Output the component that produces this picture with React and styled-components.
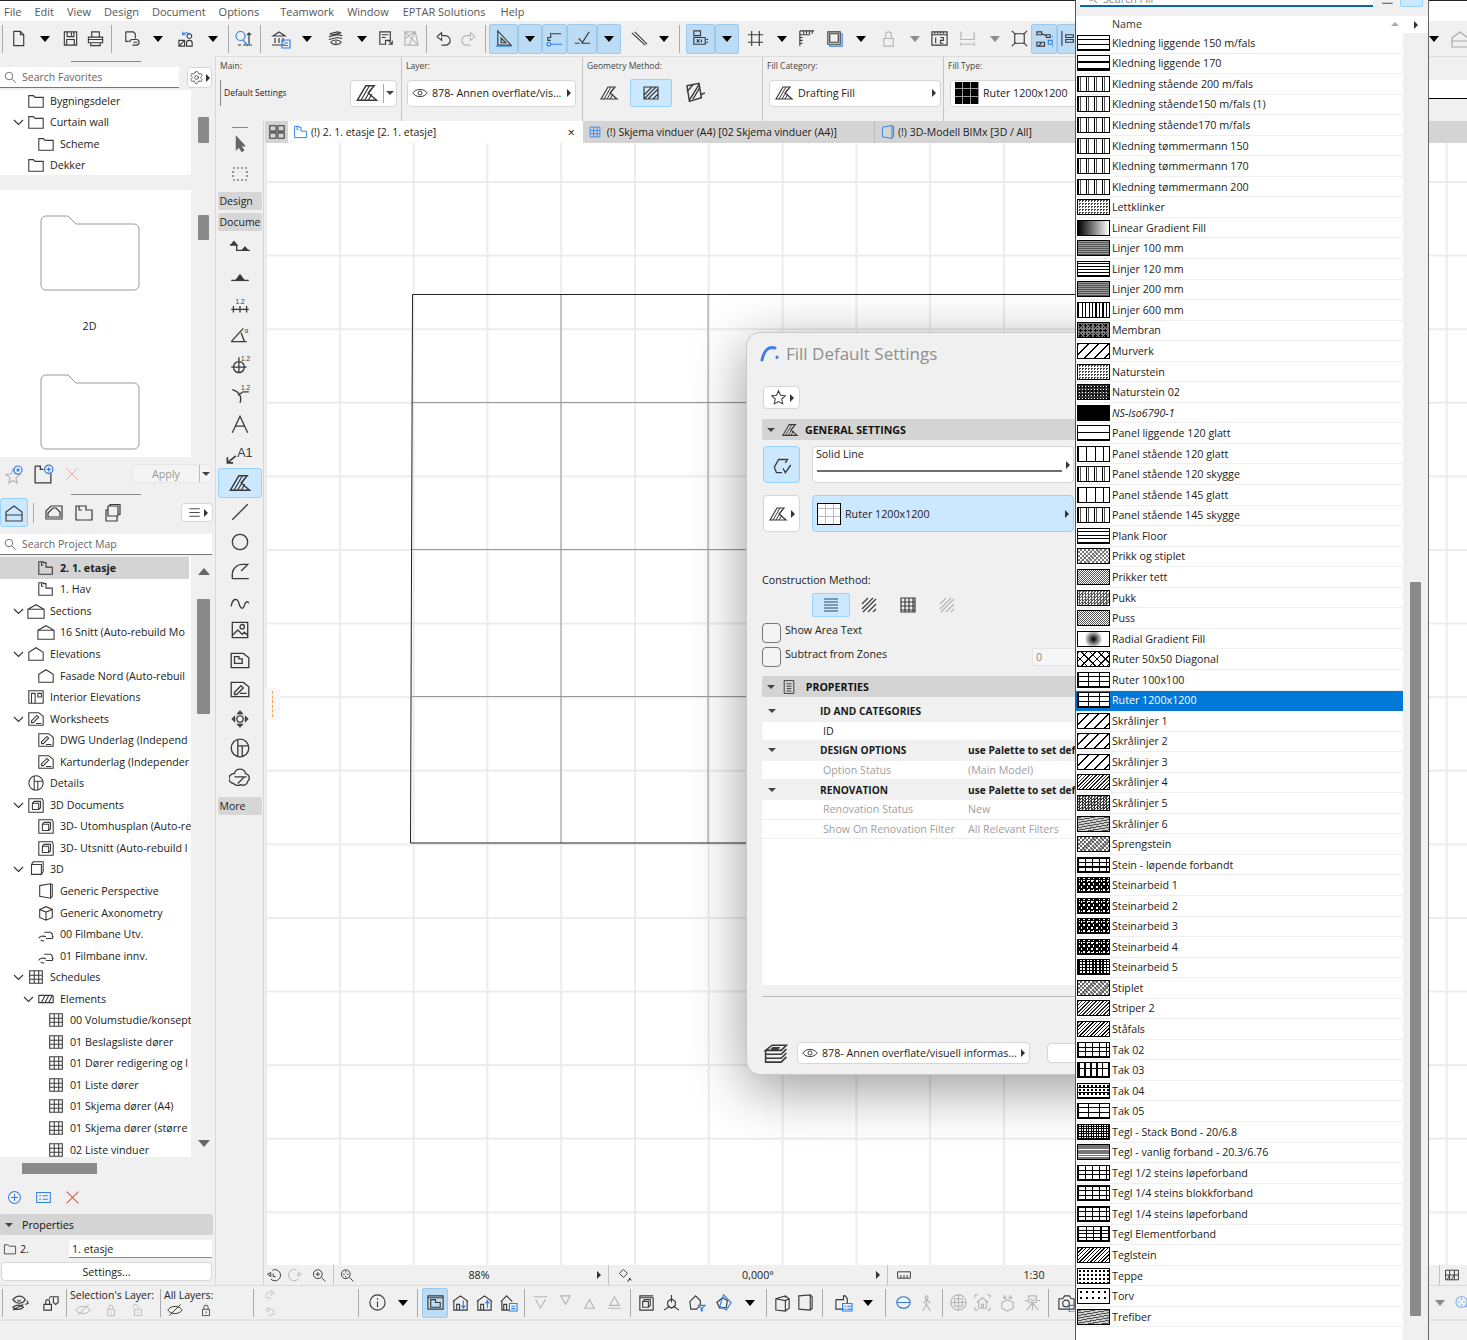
import React from 'react';
import styled, { createGlobalStyle } from 'styled-components';
import { Settings } from 'lucide-react';

const GlobalStyle = createGlobalStyle`
  html, body {
    margin: 0;
    padding: 0;
    background: #f0f0f0;
  }
  body {
    font-family: "Open Sans", "Noto Sans", "Liberation Sans", sans-serif;
    font-size: 10.7px;
    color: #222;
  }
  * {
    box-sizing: border-box;
  }
`;

const icons = {
  new: 'M5 2.5h7l3.5 3.5v11.5H5zM12 2.5V6h3.5',
  save: 'M3.5 3h13v14h-13zM6.5 3v5h7V3M6 17v-6h8v6M11 4v3',
  print: 'M6 8V3h8v5M2.5 8.5h15v6h-15zM5 14.5v3h10v-3M2.5 11h15',
  doclink: 'M4 3h8l2 2v5M4 3v10h3M8 14a3 3 0 0 1 3-3h4a3 3 0 0 1 0 6h-4M12 14h4',
  publish: { d: 'M2 18v-6h6v6zM2 18l6-6M13 10a2.5 2.5 0 1 1 .01 0M10 18v-3a3 3 0 0 1 6 0v3z', b: 'M6 6a5 5 0 0 1 8 0M6 3v3h3' },
  find: { d: 'M8 16l9 0M3 16h3M14 15V4M12 6l2-2 2 2', b: 'M10 7a4.5 4.5 0 1 1-9 0a4.5 4.5 0 0 1 9 0zM8 11l5 6' },
  bank: { d: 'M1 16h13M2 7l6-4 6 4zM4 9v5M8 9v5M12 9v4', b: 'M11 11h8v8h-8zM13 14h4M13 16.5h4' },
  layers: 'M4 5l8-2 4 1-8 2zM3 8l9-2 5 1M3 11l9-2 5 1M5 14a6 4 0 0 1 11 0a6 4 0 0 1-11 0zM10.5 12.5v3',
  notes: 'M3 3h11v9H9v4H3zM5 6h7M5 9h4M12 12l4 4M16 12v4h-4',
  zone: 'M3 3l11 0 3 14-14 0zM3 10l11-7M7 17l7-14M3 3l14 14',
  undo: 'M3 8l5-4v3h4a5 5 0 0 1 0 10H8M3 8l5 4V9',
  redo: 'M17 8l-5-4v3H8a5 5 0 0 0 0 10h4M17 8l-5 4V9',
  triangle: { d: 'M4 2v15h14zM7.5 9.5v5h5z', b: 'M2 18h17' },
  snap: { d: 'M6 4v5H3v3h3M7 5h10', b: 'M2 16a2 2 0 1 0 4 0a2 2 0 0 0-4 0zM6 16h12' },
  check: 'M9 15h9M2 15h5M6 10l4 4 7-11',
  dbl: 'M3 4l14 13M6 3l13 13',
  xy: 'M3 2h7v5H3zM3 9h12v7H3zM6 11l3 3M9 11l-3 3M11 11v3M16 11h2M16 14h2',
  gridx: 'M2 6h16M2 14h16M6 2v16M14 2v16',
  ruler: 'M3 2v16M3 2h15M3 6h11M7 2v3M10 2v3M13 2v3M16 2v3M3 9h3M3 12h3M3 15h3',
  offset: { d: 'M3 3h13v13H3zM5 5h9v9H5z', b: 'M16 5h2v13H5v-2' },
  lockman: 'M7 10V6a3 3 0 1 1 6 0v4M5 10h10v8H5z',
  ruler12: 'M2 3h16v3H2zM5 3v2M8 3v2M11 3v2M14 3v2M2 6v11h16V6M6 9v6M11 9h3v3h-3v3h3',
  dim: 'M3 3v8h14V3M3 14v4M17 14v4M4 16h12',
  crossx: 'M5 5h10v10H5zM2 2l4 4M18 2l-4 4M2 18l4-4M18 18l-4-4',
  teamsel: { d: 'M2 3h5v3H2zM12 6h4v3h-4zM7 5l5 2M2 14h8v4H2zM4 18l3-4', b: 'M14 12h4v4h-4zM18 8h1M18 18h1' },
  split: 'M2 2v16M6 6h8v3H6zM6 11h8v3H6z',
  grid4: 'M2 3h7v6H2zM11 3h7v6h-7zM2 11h7v6H2zM11 11h7v6h-7z',
  eye: 'M1 10c4-6 14-6 18 0c-4 6-14 6-18 0zM12.5 10a2.5 2.5 0 1 1-5 0a2.5 2.5 0 0 1 5 0z',
  fill: { d: 'M2 16L9 4h7l-5 6 7 6z', f: 'M5 16l7-12M8 16l6-10M11 16l3-5' },
  rectfill: 'M3 4h14v12H3zM3 12l8-8M3 16l12-12M7 16l10-10M12 16l5-5',
  rotfill: 'M5 4l10-2 2 12-10 3zM7 16L15 3M10 15l6-10M5 9l5-6M17 11l3-1',
  star: 'M10 2l2.4 5.4 5.6.6-4.2 3.8 1.2 5.7L10 14.8l-5 2.7 1.2-5.7L2 8l5.6-.6z',
  starplus: { d: 'M9 5l2 5 5 .5-4 3.4 1 5.1-4-2.6-4 2.6 1-5.1L2 10.5l5-.5z', b: 'M18 6a4 4 0 1 1-8 0a4 4 0 0 1 8 0zM14 4v4M12 6h4' },
  folderplus: { d: 'M2 3h5v3h3M17 10v9H2V3', b: 'M19 6a4 4 0 1 1-8 0a4 4 0 0 1 8 0zM15 4v4M13 6h4' },
  cross: 'M3 3l14 14M17 3L3 17',
  menu: 'M3 5h14M3 10h14M3 15h14',
  house: 'M2 9l8-6 8 6v9H2zM2 12h16',
  plansheet: 'M2 3h10v4h6v10H2zM5 3v4h3',
  houseplan: 'M2 8l5-5h11v13H2zM4 10l5-5h3l4 4v5H4z',
  stack: 'M4 3h10v10H4zM6 3V1.5h10v10h-2M4 7H2v11h11v-5',
  search: 'M13 8a5 5 0 1 1-10 0a5 5 0 0 1 10 0zM12 12l5 5',
  plan: 'M2 3h5v1h3v5h7v8H2zM5 3v4h2',
  section: 'M1 8l9-5 9 5v10H1zM1 8h18',
  elev: 'M2 8l8-5 8 5v9H2z',
  ielev: 'M2 3h16v14H2zM5 17V6h4v11M12 6h4v4h-4z',
  ws: 'M2 3h11l5 4v10H2zM5 12l6-6 2 2-6 6H5zM10 15h6',
  detail: 'M18 10a8 8 0 1 1-16 0a8 8 0 0 1 16 0zM8 2.5v15M8 8h10M12 8v9',
  doc3d: 'M2 3h15l1 3v12H2zM6 8h7v7H6zM6 8l2-2h7v7l-2 2',
  cube: 'M5 5h11v11H5zM5 5l2-3h11v11l-2 3',
  persp: 'M3 4l12-2 2 1v13l-2 2-12-2zM15 2v16',
  axo: 'M3 6l7-3 7 3v9l-7 3-7-3zM3 6l7 3 7-3M10 9v9',
  film: 'M2 15a5 3 0 0 1 8-2M10 15h7l1-3M8 8h7l2 2v3M4 17l4 1',
  sched: 'M3 3h14v14H3zM3 8h14M3 12.5h14M8 3v14M13 3v14',
  elems: 'M2 6h15l1 1v7H2zM5 14l4-8M9 14l4-8M13 14l4-8',
  folder: 'M2 4h5l2 2h9v11H2z',
  arrow: { d: 'M6 2v14l3-3 3 5 2-1-3-5h4z', k: 'M6 2v14l3-3 3 5 2-1-3-5h4z' },
  marquee: 'M3 4h2M7 4h2M11 4h2M15 4h2M3 16h2M7 16h2M11 16h2M15 16h2M3 7v2M3 11v2M17 7v2M17 11v2',
  level: { d: 'M1 8h6M7 8v5h12', k: 'M2 8l2.5-3 2.5 3zM12 13l2.5-3 2.5 3z' },
  elevm: { d: 'M2 14h16', k: 'M7 13l3-4 3 4z' },
  lindim: { d: 'M2 13h16M4 10v6M16 10v6M10 10v6', t: ['1.2', 6, 8] },
  angle: { d: 'M2 16L13 4M2 16h14M11 8l3 8', t: ['α', 14, 8] },
  radial: { d: 'M9 7a5 5 0 1 0 .01 0zM9 3v14M2 12h14', t: ['1.2', 11, 6] },
  levelcurve: { d: 'M3 6c6 2 9 6 7 12M8 11l5-3h5', t: ['1.2', 11, 6] },
  letterA: 'M3 18l7-15 7 15M6 12h8',
  label: { d: 'M1 17l6-5M1 13v4h4', t: ['A1', 8, 13, 9] },
  line: 'M3 17L17 3',
  circle: 'M17 10a7 7 0 1 1-14 0a7 7 0 0 1 14 0z',
  arc: 'M3 17v-5a9 9 0 0 1 9-8h5l-6 6M3 17h15',
  spline: 'M2 15c1-8 6-8 7-3s4 6 5 2 3-4 4-2',
  image: 'M3 3h14v14H3zM3 15l5-5 4 4 2-2 3 3M14 7a2 2 0 1 1-4 0a2 2 0 0 1 4 0z',
  drawing: 'M2 4h11l5 4v9H2zM5 7h4v2h3v4H5z',
  wsdoc: 'M2 4h11l5 4v9H2zM5 13l6-6 2 2-6 6H5zM10 14h6',
  move: 'M10 7a3 3 0 1 0 .01 0zM3 10l2-2v4zM17 10l-2-2v4zM10 3L8 5h4zM10 17l-2-2h4z',
  cloud: 'M5 6a5 4 0 0 1 10 0a4 4 0 0 1 2 7a4 4 0 0 1-6 3a5 4 0 0 1-7-1a4 4 0 0 1 1-9zM5 9h11M8 15l6-6',
  listsq: { b: 'M2 4h16v12H2zM5 8h2M5 12h2M9 8h6M9 12h6' },
  plusc: { b: 'M17 10a7 7 0 1 1-14 0a7 7 0 0 1 14 0zM10 6v8M6 10h8' },
  rewind: 'M8 4a7 7 0 1 1-2 11M2 9l4-2v5zM9 8v4h3',
  forward: 'M12 4a7 7 0 1 0 2 11M18 9l-4-2v5z',
  zoomin: 'M14 9a5.5 5.5 0 1 1-11 0a5.5 5.5 0 0 1 11 0zM13 13l5 5M8.5 6.5v5M6 9h5',
  zoomfit: 'M14 9a5.5 5.5 0 1 1-11 0a5.5 5.5 0 0 1 11 0zM13 13l5 5M8.5 5v2M8.5 11v2M5 9h2M10 9h2',
  rotate: 'M3 8l5-5 5 5-5 5zM14 18l2-4 2 3M16 14a5 5 0 0 1-3 4',
  rulerS: 'M2 6h16v8H2zM6 10v4M10 10v4M14 10v4',
  swap: 'M2 7c4-5 10-5 13 0c-3 5-9 5-13 0zM10 7a1.5 1.5 0 1 1-3 0M2 15c4-3 9-3 11 0c-3 3-8 3-11 0zM2 18L13 12M17 8l1 3-3 1',
  locks: 'M3 12h8v6H3zM5 12V9a2 2 0 0 1 4 0v3M13 4h5v6l-2.5 2-2.5-2zM9 6a2 2 0 0 1 3-2',
  eyeoff: 'M1 10c4-6 14-6 18 0c-4 6-14 6-18 0zM3 17L17 3',
  lock: 'M5 9h10v9H5zM7 9V6a3 3 0 0 1 6 0v3M10 12v3',
  unlock: 'M5 9h10v9H5zM3 6a3 3 0 0 1 6-2l2 3M10 12v3',
  info: 'M18 10a8 8 0 1 1-16 0a8 8 0 0 1 16 0zM10 9v6M10 5.5v1.5',
  window: 'M2 3h16v14H2zM2 5h16M5 7h5v3h5v5H5z',
  bdown: { d: 'M2 9l8-6 8 6M3 8v10h14V8M6 18v-6h3v6', b: 'M13 8v8M11 13l2 3 2-3' },
  bup: { d: 'M2 9l8-6 8 6M3 8v10h14V8M6 18v-6h3v6', b: 'M13 16V8M11 11l2-3 2 3' },
  bsel: { d: 'M2 9l6-6 6 6M3 8v10h8M5 18v-6h3v6', b: 'M11 11h8v8h-8zM13 14h4M13 16.5h4' },
  tridown: 'M3 4h14M5 7l5 9 5-9',
  triup: 'M5 16l5-9 5 9z',
  trilow: 'M3 16h14M5 13l5-9 5 9z',
  tribt: 'M5 3l5 9 5-9z',
  cam3d: 'M3 5h14v13H3zM6 9h6v6H6zM6 9l2-2h6v6l-2 2M3 5V3h14',
  explode: 'M10 2v8M2 18l6-4M18 18l-6-4M6 9l4-3 4 3v4l-4 3-4-3z',
  cubefil: { d: 'M3 9l6-6 5 5v5l-4 4H4z', b: 'M12 13h7l-3 3v3h-1v-3z' },
  tilt: { d: 'M3 10l6-5 5 3-1 7-7 1z', b: 'M6 14l4-12 8 8-5 8z' },
  box: 'M3 6l10-3 4 3v10l-4 3-10-1zM13 3v2M3 6l10 2 4-2M13 8v11',
  panel: 'M3 3l12-1 2 2v12l-2 2-12-1zM15 2v16',
  houselist: { d: 'M2 7h8V3h2l2 3v5M2 7v10h8', b: 'M9 11h10v8H9zM11 14h2M11 17h2M14 14h4M14 17h4' },
  orbit: { b: 'M10 4a7 6 0 1 1-.01 0zM3 10h14M6 15a7 3 0 0 0 9 0' },
  walk: 'M10 3a1.5 1.5 0 1 1-.01 0zM10 6l-3 5M10 6l4 5M10 6v6l-4 7M10 12l4 7',
  focus: 'M18 10a8 8 0 1 1-16 0a8 8 0 0 1 16 0zM10 1v18M1 10h18M6 6h8v8H6z',
  housef: 'M2 2h3M15 2h3M2 18h3M15 18h3M2 2v3M18 2v3M2 15v3M18 15v3M4 10l6-5 6 5M6 9v7h8V9M9 16v-4h2v4',
  cubeA: 'M4 10l6-3 6 3v6l-6 3-6-3zM7 2v4M13 2v4M5 4l2 2 2-2M11 4l2 2 2-2',
  tripod: 'M6 3h8v7H6zM8 6a2 2 0 1 0 4 0M2 8h3M15 8h3M10 10l-6 8M10 10l6 8M10 10v8',
  camera: { d: 'M2 6h4l2-3h5l2 3h3v11H2zM13 11a3.5 3.5 0 1 1-7 0a3.5 3.5 0 0 1 7 0z', b: 'M13 13h7v7h-7z' },
  constr1: 'M3 4h14M3 7h14M3 10h14M3 13h14M3 16h14',
  constr2: 'M3 9l6-6M3 14l11-11M4 17l13-13M9 17l8-8M14 17l3-3',
  constr3: 'M3 3h14v14H3zM3 7h14M3 11h14M3 15h14M7 3v14M11 3v14M15 3v14',
  reportdoc: 'M4 2h12v16H4zM7 6h6M7 9h6M7 12h6M7 15h6',
  checkshape: 'M3 12l4-7h8l-2 3M3 12l2 5h5M11 13l2 4 5-7',
  layerstack: 'M2 8l5-4h11l-4 4zM2 8v3h12l4-4M2 11v3h12l4-4M2 14v3h12l4-4M7 6h6M6 7h6',
  hatchbox: 'M2 4h16v12H2zM2 10h16M7 4v12M13 4v12M4 16l3-6M9 16l4-6'
};

const ROW_H = 21.55;
const LIST_ROW_H = 20.55;

const IconSvg = styled.svg`
  display: block;
  flex: none;
  width: ${p => p.$size}px;
  height: ${p => p.$size}px;
  fill: none;
  stroke: ${p => p.$c};
  stroke-width: 1.2;
`;

const BluePath = styled.path`
  stroke: #2f7fe6;
`;

const HatchPath = styled.path`
  stroke-width: 1;
`;

const SolidPath = styled.path`
  fill: ${p => p.$c};
`;

const IconText = styled.text`
  fill: ${p => p.$c};
  stroke: none;
  font-family: "Liberation Sans", sans-serif;
  font-size: ${p => p.$fs}px;
`;

function Icon({ name, size = 20, c = '#3a3a3a' }) {
  const i = icons[name];
  const d = typeof i === 'string' ? i : i.d;
  return (
    <IconSvg viewBox="0 0 20 20" $size={size} $c={c}>
      {d ? <path d={d} /> : null}
      {i.k ? <SolidPath d={i.k} $c={c} /> : null}
      {i.f ? <HatchPath d={i.f} /> : null}
      {i.b ? <BluePath d={i.b} /> : null}
      {i.t ? <IconText x={i.t[1]} y={i.t[2]} $c={c} $fs={i.t[3] || 6}>{i.t[0]}</IconText> : null}
    </IconSvg>
  );
}

const Page = styled.div`
  position: relative;
  width: 1467px;
  height: 1340px;
  overflow: hidden;
  display: grid;
  grid-template-rows: 21px 35px 1229px 55px;
  background: #f0f0f0;
`;

const MenuBar = styled.div`
  display: flex;
  align-items: center;
  gap: 13px;
  padding-left: 4px;
  background: #fff;
  border-top: 1px solid #222;
  font-size: 11px;
  color: #555;
`;

const MenuItem = styled.span`
  margin-left: ${p => p.$ml || 0}px;
`;

const Caret = styled.span`
  display: block;
  width: 0;
  height: 0;
  border-left: 5.5px solid transparent;
  border-right: 5.5px solid transparent;
  border-top: 6px solid ${p => (p.$muted ? '#8c8c8c' : '#000')};
`;

const TriRight = styled.span`
  display: block;
  flex: none;
  width: 0;
  height: 0;
  border-top: 4px solid transparent;
  border-bottom: 4px solid transparent;
  border-left: 4px solid #333;
`;

const TriDown = styled.span`
  display: block;
  flex: none;
  width: 0;
  height: 0;
  border-left: 4px solid transparent;
  border-right: 4px solid transparent;
  border-top: 4px solid #444;
`;

const Toolbar = styled.div`
  display: flex;
  align-items: center;
`;

const ToolCell = styled.div`
  flex: none;
  width: ${p => p.$w}px;
  height: 30px;
  display: flex;
  align-items: center;
  justify-content: center;
  border-radius: 2px;
  background: ${p => (p.$on ? '#bcdcf5' : 'transparent')};
  border: 1px solid ${p => (p.$on ? '#9cc9ee' : 'transparent')};
`;

const EdgeCell = styled(ToolCell)`
  margin-right: -9px;
`;

const ToolSep = styled.div`
  flex: none;
  width: ${p => p.$w}px;
  height: 28px;
  display: flex;
  justify-content: center;
  &::after {
    content: '';
    width: 1px;
    background: #aaa;
  }
`;

const Stretch = styled.div`
  flex: 1;
`;

const Main = styled.div`
  display: flex;
  min-height: 0;
`;

const LeftPanel = styled.div`
  flex: none;
  width: 216px;
  display: flex;
  flex-direction: column;
  border-right: 1px solid #d8d8d8;
`;

const Gripper = styled.div`
  flex: none;
  width: 70px;
  height: 1px;
  margin: ${p => p.$mt}px 0 0 71px;
  background: #888;
`;

const SearchBox = styled.div`
  flex: none;
  display: flex;
  align-items: center;
  gap: 4px;
  width: ${p => p.$w}px;
  height: 21px;
  padding-left: 3px;
  background: #fff;
  border-bottom: 1px solid #777;
  color: #666;
  font-size: 10.5px;
`;

const RowBlock = styled.div`
  flex: none;
  display: flex;
  align-items: center;
  height: ${p => p.$h}px;
  margin-top: ${p => p.$mt}px;
`;

const SmallBtn = styled.div`
  flex: none;
  display: flex;
  align-items: center;
  justify-content: center;
  gap: 2px;
  width: ${p => p.$w}px;
  height: ${p => p.$h}px;
  margin-left: ${p => p.$ml || 0}px;
  background: #fff;
  border: 1px solid #d6d6d6;
  border-radius: 4px;
`;

const TreeArea = styled.div`
  flex: none;
  display: flex;
  height: ${p => p.$h}px;
  margin-top: ${p => p.$mt}px;
`;

const TreeList = styled.div`
  flex: none;
  width: 191px;
  height: 100%;
  overflow: hidden;
  background: #fff;
`;

const TreeRow = styled.div`
  display: flex;
  align-items: center;
  height: ${ROW_H}px;
  padding-left: ${p => 10 + p.$level * 10}px;
  background: ${p => (p.$sel ? '#d4d4d4' : 'transparent')};
  margin-right: ${p => (p.$sel ? 2 : 0)}px;
  font-weight: ${p => (p.$sel ? 700 : 400)};
  white-space: nowrap;
`;

const Chevron = styled.svg`
  flex: none;
  width: 17px;
  height: 10px;
  fill: none;
  stroke: #333;
  stroke-width: 1.1;
`;

const TreeLabel = styled.span`
  margin-left: 5px;
`;

const ScrollCol = styled.div`
  flex: none;
  width: 25px;
  display: flex;
  flex-direction: column;
  align-items: center;
`;

const Thumb = styled.div`
  flex: none;
  width: ${p => p.$w || 11}px;
  height: ${p => p.$h}px;
  margin-top: ${p => p.$mt}px;
  background: #8a8a8a;
  border-radius: 1px;
`;

const HorizontalThumb = styled.div`
  flex: none;
  width: 75px;
  height: 11px;
  margin: 6px 0 0 22px;
  background: #8a8a8a;
`;

const ScrollTri = styled.span`
  display: block;
  width: 0;
  height: 0;
  margin-top: ${p => p.$mt}px;
  border-left: 6px solid transparent;
  border-right: 6px solid transparent;
  border-${p => (p.$down ? 'top' : 'bottom')}: 7px solid #666;
`;

const Preview = styled.div`
  flex: none;
  width: 191px;
  height: 100%;
  padding: 25px 12px 0 0;
  overflow: hidden;
  background: #fff;
  display: flex;
  flex-direction: column;
  align-items: center;
`;

const BigFolder = styled.svg`
  flex: none;
  width: 100px;
  height: 76px;
  margin-top: ${p => p.$mt}px;
  fill: #fff;
  stroke: #9a9a9a;
  stroke-width: 1;
`;

const PreviewLabel = styled.div`
  margin-top: 28px;
  height: 16px;
`;

const IconSlot = styled.div`
  flex: none;
  display: flex;
  align-items: center;
  justify-content: center;
  width: ${p => p.$w}px;
  height: 100%;
  margin-left: ${p => p.$ml || 0}px;
  border-radius: 3px;
  background: ${p => (p.$on ? '#cce8ff' : 'transparent')};
  border: 1px solid ${p => (p.$on ? '#99d1ff' : 'transparent')};
`;

const VLine = styled.div`
  flex: none;
  width: 1px;
  height: ${p => p.$h}px;
  margin-left: ${p => p.$ml || 0}px;
  background: #aaa;
`;

const ApplyBtn = styled.div`
  flex: none;
  display: flex;
  align-items: center;
  width: 80px;
  height: 19px;
  margin-left: ${p => p.$ml}px;
  border-radius: 4px;
  background: #f4f4f4;
  border: 1px solid #e6e6e6;
  color: #999;
`;

const ApplyText = styled.span`
  flex: 1;
  text-align: center;
`;

const ApplyCaret = styled.span`
  flex: none;
  display: flex;
  align-items: center;
  justify-content: center;
  width: 12px;
  height: 100%;
  border-left: 1px solid #bbb;
`;

const SectionBar = styled.div`
  flex: none;
  display: flex;
  align-items: center;
  height: 21px;
  width: ${p => (p.$w ? `${p.$w}px` : 'auto')};
  margin-top: ${p => p.$mt}px;
  padding-left: ${p => p.$pl}px;
  gap: ${p => p.$gap}px;
  background: #d4d4d4;
  border-radius: 2px;
  color: #111;
`;

const StoryName = styled.span`
  flex: none;
  width: 49px;
  margin-left: 3px;
`;

const WhiteField = styled.div`
  flex: none;
  display: flex;
  align-items: center;
  width: 143px;
  height: 18px;
  padding-left: 3px;
  background: #fff;
  border-bottom: 1px solid #888;
`;

const WideBtn = styled.div`
  flex: none;
  display: flex;
  align-items: center;
  justify-content: center;
  width: 211px;
  height: 19px;
  margin: 4px 0 0 1px;
  background: #fff;
  border: 1px solid #d6d6d6;
  border-radius: 4px;
`;

const RightSide = styled.div`
  flex: 1;
  display: flex;
  flex-direction: column;
  min-width: 0;
`;

const InfoBox = styled.div`
  flex: none;
  height: 65px;
  display: flex;
  border-top: 1px solid #ddd;
`;

const InfoCell = styled.div`
  flex: none;
  width: ${p => p.$w}px;
  height: 100%;
  padding-left: 4px;
  border-right: 1px solid #c6c6c6;
  display: flex;
  flex-direction: column;
`;

const InfoLabel = styled.div`
  height: 17px;
  font-size: 8.5px;
  line-height: 17px;
  color: #444;
`;

const InfoBody = styled.div`
  display: flex;
  align-items: center;
  height: 28px;
  margin-top: 5px;
`;

const DefaultText = styled.span`
  flex: none;
  width: 130px;
  font-size: 8.5px;
  padding-left: 3px;
  border-left: 1px solid #888;
  line-height: 26px;
`;

const Select = styled.div`
  flex: none;
  display: flex;
  align-items: center;
  gap: 4px;
  width: ${p => p.$w}px;
  height: ${p => p.$h || 27}px;
  margin-left: ${p => p.$ml || 0}px;
  padding: 0 4px;
  background: ${p => (p.$on ? '#cce8ff' : '#fff')};
  border: 1px solid ${p => (p.$on ? '#99d1ff' : '#d6d6d6')};
  border-radius: 4px;
  white-space: nowrap;
  overflow: hidden;
`;

const SelectText = styled.span`
  flex: 1;
  overflow: hidden;
`;

const CaretDivider = styled.span`
  flex: none;
  display: flex;
  align-items: center;
  height: 19px;
  padding-left: 2px;
  border-left: 1px solid #aaa;
`;

const BlackSwatch = styled.span`
  flex: none;
  width: 24px;
  height: 22px;
  background:
    repeating-linear-gradient(90deg, transparent 0 7px, #999 7px 8px),
    repeating-linear-gradient(0deg, transparent 0 7px, #999 7px 8px),
    #000;
`;

const WhiteSwatch = styled(BlackSwatch)`
  background:
    repeating-linear-gradient(90deg, transparent 0 7px, #bbb 7px 8px),
    repeating-linear-gradient(0deg, transparent 0 7px, #bbb 7px 8px),
    #fff;
  border: 1px solid #000;
`;

const InfoEdge = styled.div`
  flex: none;
  width: 39px;
  height: 19px;
  margin-top: 23px;
  background: #fff;
  border-bottom: 1px solid #000;
`;

const WorkRow = styled.div`
  flex: 1;
  display: flex;
  min-height: 0;
`;

const Toolbox = styled.div`
  flex: none;
  width: 48px;
  display: flex;
  flex-direction: column;
  align-items: center;
  padding-top: 6px;
  border-right: 1px solid #d4d4d4;
`;

const ToolboxGrip = styled.div`
  flex: none;
  width: 16px;
  height: 1px;
  background: #888;
`;

const ToolboxTop = styled.div`
  flex: none;
  display: flex;
  align-items: center;
  justify-content: center;
  height: 29px;
  margin-top: 1px;
`;

const ToolboxTab = styled.div`
  flex: none;
  width: 44px;
  height: 18px;
  margin-top: ${p => p.$mt}px;
  margin-bottom: ${p => p.$mb || 0}px;
  padding-left: 2px;
  background: #d6d6d6;
  border-radius: 2px;
  font-size: 10.5px;
  line-height: 18px;
  overflow: hidden;
  white-space: nowrap;
  color: #222;
`;

const ToolboxItem = styled.div`
  flex: none;
  display: flex;
  align-items: center;
  justify-content: center;
  width: 44px;
  height: 29.5px;
  border-radius: 3px;
  background: ${p => (p.$on ? '#cce8ff' : 'transparent')};
  border: 1px solid ${p => (p.$on ? '#99d1ff' : 'transparent')};
`;

const ViewColumn = styled.div`
  flex: 1;
  display: flex;
  flex-direction: column;
  min-width: 0;
  padding-left: 1px;
`;

const TabBar = styled.div`
  flex: none;
  display: flex;
  height: 22px;
  background: #d4d4d4;
  font-size: 10.5px;
  white-space: nowrap;
`;

const GridTab = styled.div`
  flex: none;
  display: flex;
  align-items: center;
  justify-content: center;
  width: 23px;
`;

const Tab = styled.div`
  flex: none;
  display: flex;
  align-items: center;
  gap: 2px;
  width: ${p => p.$w}px;
  padding-left: 5px;
  background: ${p => (p.$on ? '#fff' : 'transparent')};
  border-right: ${p => (p.$line ? '1px solid #bbb' : 'none')};
`;

const TabClose = styled.span`
  margin-left: auto;
  margin-right: 8px;
  font-size: 13px;
  line-height: 1;
  color: #222;
`;

const Canvas = styled.div`
  position: relative;
  flex: 1;
  min-height: 0;
  background-color: #fff;
  background-image:
    linear-gradient(90deg, #ececec 1.5px, transparent 1.5px),
    linear-gradient(#ececec 1.5px, transparent 1.5px);
  background-size: 73.8px 73.6px;
  background-position: 0 38px;
`;

const Drawing = styled.svg`
  position: absolute;
  inset: 0;
  width: 100%;
  height: 100%;
  fill: none;
`;

const OriginMark = styled.div`
  position: absolute;
  left: 0;
  top: 545px;
  width: 15px;
  height: 32px;
  background: #f7f7f7;
  display: flex;
  justify-content: center;
  &::after {
    content: '';
    margin-top: 3px;
    height: 26px;
    border-left: 1px dashed #f2a14a;
  }
`;

const NavBar = styled.div`
  flex: none;
  display: flex;
  align-items: center;
  height: 20px;
`;

const NavCell = styled.div`
  flex: none;
  display: flex;
  align-items: center;
  justify-content: center;
  width: ${p => p.$w}px;
  padding-left: ${p => p.$pl || 0}px;
  height: 100%;
`;

const NavSep = styled.div`
  flex: none;
  width: 1px;
  height: 100%;
  margin: 0 ${p => p.$mx || 2}px;
  background: #c4c4c4;
`;

const NavEnd = styled(NavCell)`
  margin-right: 5px;
`;

const StatusBar = styled.div`
  display: flex;
  align-items: flex-start;
  border-top: 1px solid #dcdcdc;
`;

const StatusRow = styled.div`
  flex: 1;
  display: flex;
  align-items: center;
  height: 35px;
  border-bottom: 2px solid #e2e2e2;
`;

const LayerGroup = styled.div`
  flex: none;
  width: ${p => p.$w}px;
  display: flex;
  flex-direction: column;
  padding: 1px 0 0 2px;
`;

const LayerTitle = styled.div`
  font-size: 10.5px;
  line-height: 14px;
  white-space: nowrap;
  color: #222;
`;

const LayerIcons = styled.div`
  display: flex;
  justify-content: space-between;
  align-items: center;
  width: ${p => p.$w}px;
  margin-left: ${p => p.$ml}px;
`;

const UndoStack = styled.div`
  flex: none;
  width: 30px;
  display: flex;
  flex-direction: column;
  align-items: center;
  gap: 5px;
`;

const Dialog = styled.div`
  position: absolute;
  left: 746px;
  top: 332px;
  width: 420px;
  height: 743px;
  padding-left: 15px;
  display: flex;
  flex-direction: column;
  align-items: flex-start;
  background: #f0f0f0;
  border: 1px solid #c8c8c8;
  border-radius: 14px;
  box-shadow: 0 14px 55px rgba(0, 0, 0, 0.4);
  z-index: 2;
`;

const DialogTitle = styled.div`
  flex: none;
  display: flex;
  align-items: center;
  gap: 6px;
  height: 42px;
  margin-left: -3px;
  padding-bottom: 2px;
  font-size: 17px;
  color: #8f8f8f;
`;

const TitleMark = styled.svg`
  flex: none;
  width: 21px;
  height: 20px;
  fill: none;
  stroke: #3f7fe0;
  stroke-width: 3;
  stroke-linecap: round;
`;

const DialogBtn = styled.div`
  flex: none;
  display: flex;
  align-items: center;
  justify-content: center;
  gap: 3px;
  width: 37px;
  height: ${p => p.$h}px;
  margin-top: ${p => p.$mt || 0}px;
  margin-left: 1px;
  background: ${p => (p.$on ? '#cce8ff' : '#fff')};
  border: 1px solid ${p => (p.$on ? '#99d1ff' : '#d6d6d6')};
  border-radius: 4px;
`;

const FullBar = styled(SectionBar)`
  align-self: stretch;
  margin-right: 80px;
  font-size: 10.6px;
  font-weight: 700;
`;

const DialogRow = styled.div`
  flex: none;
  display: flex;
  align-items: center;
  height: ${p => p.$h}px;
  margin-top: ${p => p.$mt}px;
`;

const LineSelect = styled.div`
  position: relative;
  flex: none;
  width: 262px;
  height: 37px;
  margin-left: 12px;
  padding: 0 3px;
  background: #fff;
  border: 1px solid #d6d6d6;
  border-radius: 4px;
  line-height: 14px;
`;

const LineRule = styled.div`
  position: absolute;
  left: 4px;
  right: 11px;
  top: 23px;
  height: 2px;
  background: #6e6e6e;
`;

const OverTri = styled.div`
  position: absolute;
  right: 3px;
  top: 14px;
`;

const ConstructionLabel = styled.div`
  flex: none;
  height: 16px;
  margin-top: 40px;
  line-height: 16px;
`;

const ConstrBtn = styled.div`
  flex: none;
  display: flex;
  align-items: center;
  justify-content: center;
  width: ${p => p.$w}px;
  height: 100%;
  margin-left: ${p => p.$ml || 0}px;
  border-radius: 2px;
  background: ${p => (p.$on ? '#cce8ff' : 'transparent')};
  border: 1px solid ${p => (p.$on ? '#99d1ff' : 'transparent')};
`;

const Check = styled.span`
  flex: none;
  width: 19px;
  height: 20px;
  background: #f4f4f4;
  border: 1px solid #777;
  border-radius: 4px;
`;

const CheckText = styled.span`
  flex: none;
  margin: -6px 0 0 4px;
`;

const ZeroInput = styled.div`
  flex: none;
  width: 48px;
  height: 18px;
  margin-left: 145px;
  padding-left: 3px;
  background: #f6f6f6;
  border: 1px solid #e4e4e4;
  color: #8a8a8a;
  line-height: 16px;
`;

const PropTable = styled.div`
  flex: none;
  align-self: stretch;
  height: 283px;
  margin: 5px 80px 0 0;
  background: #fff;
  color: #a0a0a0;
`;

const PropRow = styled.div`
  display: grid;
  grid-template-columns: ${p => (p.$group ? '58px 148px' : '61px 145px')} 1fr;
  align-items: center;
  height: 19.6px;
  background: ${p => (p.$group ? '#f0f0f0' : '#fff')};
  border-bottom: 1px solid ${p => (p.$group ? '#f0f0f0' : '#efefef')};
  white-space: nowrap;
  font-size: ${p => (p.$group ? '10.2px' : '10.7px')};
  font-weight: ${p => (p.$group ? 700 : 400)};
  color: ${p => (p.$group || p.$dark ? '#1a1a1a' : '#a0a0a0')};
`;

const PropTri = styled.span`
  padding-left: 6px;
`;

const Divider = styled.div`
  flex: none;
  align-self: stretch;
  height: 1px;
  margin: 11px 80px 0 0;
  background: #b9b9b9;
`;

const FooterBtn = styled.div`
  flex: none;
  width: 80px;
  height: 20px;
  margin-left: 17px;
  background: #fff;
  border: 1px solid #d6d6d6;
  border-radius: 4px;
`;

const Popup = styled.div`
  position: absolute;
  left: 1075px;
  top: -8px;
  bottom: 0;
  width: 354px;
  display: flex;
  flex-direction: column;
  background: #f0f0f0;
  border-left: 1.5px solid #555;
  border-right: 1.5px solid #666;
  z-index: 3;
`;

const PopSearchRow = styled.div`
  flex: none;
  display: flex;
  align-items: flex-start;
  height: 24px;
  padding-left: 4px;
  background: #f0f0f0;
`;

const PopSearch = styled.div`
  flex: none;
  display: flex;
  align-items: center;
  gap: 4px;
  width: 293px;
  height: 15px;
  margin-right: 7px;
  padding-left: 6px;
  background: #fff;
  border-bottom: 2px solid #0a64b4;
  color: #888;
`;

const PopViewBtn = styled.div`
  flex: none;
  width: 23px;
  height: 15px;
  margin-left: 5px;
  background: #cce8ff;
  border: 1px solid #99d1ff;
  border-radius: 2px;
`;

const PopHeader = styled.div`
  flex: none;
  display: flex;
  height: 17px;
`;

const HeaderName = styled.div`
  flex: none;
  display: flex;
  align-items: center;
  width: 327px;
  padding: 0 0 2px 36px;
  background: #fff;
  color: #333;
`;

const SortTri = styled.span`
  margin-left: auto;
  margin-right: 4px;
  width: 0;
  height: 0;
  border-left: 4px solid transparent;
  border-right: 4px solid transparent;
  border-bottom: 4px solid #aaa;
`;

const HeaderEnd = styled.div`
  flex: 1;
  display: flex;
  align-items: center;
  justify-content: center;
  background: #fff;
`;

const PopBody = styled.div`
  flex: 1;
  display: flex;
  min-height: 0;
`;

const FillList = styled.div`
  flex: none;
  width: 327px;
  background: #fff;
`;

const FillRow = styled.div`
  display: flex;
  align-items: center;
  height: ${LIST_ROW_H}px;
  padding-left: 1px;
  background: ${p => (p.$sel ? '#0078d7' : 'transparent')};
  border-bottom: 1px solid ${p => (p.$sel ? '#0078d7' : '#efefef')};
  color: ${p => (p.$sel ? '#fff' : '#1b1b1b')};
  font-style: ${p => (p.$italic ? 'italic' : 'normal')};
  white-space: nowrap;
`;

const FillScroll = styled.div`
  flex: 1;
  padding-left: 7px;
`;

const line = (deg, step, w = 1, c = '#000', bg = '#fff') =>
  `repeating-linear-gradient(${deg}deg, ${c} 0 ${w}px, ${bg} ${w}px ${step}px)`;
const clear = (deg, step, w = 1, c = '#000') =>
  `repeating-linear-gradient(${deg}deg, ${c} 0 ${w}px, transparent ${w}px ${step}px)`;
const dots = (s, r = 0.7, c = '#000') =>
  `radial-gradient(circle at 50% 50%, ${c} ${r}px, transparent ${r + 0.2}px) 0 0 / ${s}px ${s}px`;
const checker = (s, a = '#000', b = '#fff') =>
  `repeating-conic-gradient(${a} 0 25%, ${b} 0 50%) 0 0 / ${s}px ${s}px`;
const stipple = (s, a = '#444') =>
  `conic-gradient(${a} 0 25%, #fff 0 100%) 0 0 / ${s}px ${s}px`;

const swatchKinds = {
  hfals: line(0, 5),
  h: line(0, 7),
  hp: line(0, 7, 1.5),
  plank: line(0, 3.5),
  vfals: 'repeating-linear-gradient(90deg, #000 0 1px, #fff 1px 2.5px, #555 2.5px 3.5px, #fff 3.5px 8px)',
  v: line(90, 8.5),
  light: stipple(3),
  grad: 'linear-gradient(90deg, #000, #fff)',
  hgray: line(0, 2, 1, '#555', '#999'),
  h3: line(0, 3),
  v4: line(90, 3.5),
  membran: `${dots(3, 0.8)}, ${dots(5, 1)}, #777`,
  d: line(135, 7),
  d4: line(135, 2.5, 1, '#222'),
  d3: line(135, 2.6),
  stone: `${dots(3, 0.6, '#fff')}, ${dots(4, 1.1)}, #333`,
  black: '#000',
  dots2: `${checker(4, '#777', 'transparent')}, ${line(135, 5, 1, '#999')}`,
  tight: checker(2, '#555'),
  pukk: `${checker(3, '#555', 'transparent')}, ${line(135, 4, 1, '#aaa')}`,
  radial: 'radial-gradient(circle, #111 1px, #fff 9px)',
  diamond: `${clear(45, 6)}, ${line(135, 6)}`,
  grid: `${clear(90, 10.5)}, ${line(0, 5)}`,
  noise: `${checker(3, '#333', 'transparent')}, ${line(155, 3, 1, '#777')}`,
  wave: line(170, 2.5, 1, '#555', '#ccc'),
  spreng: `${checker(4, '#666', 'transparent')}, ${line(135, 6, 1, '#888')}`,
  brick: `${clear(90, 7)}, ${line(0, 4.5)}`,
  dense: `${checker(5, '#000', 'transparent')}, ${clear(90, 4, 1.5)}, ${line(0, 3)}`,
  darkbrick: `${clear(90, 3.5, 1.5)}, ${line(0, 3)}`,
  roof: `${clear(90, 6, 1.5)}, ${line(0, 7.5)}`,
  scale: `${dots(4, 1.2)}, ${line(0, 5)}`,
  bond: `${clear(90, 2.5)}, ${line(0, 2.5, 1)}`,
  bond2: `${dots(2, 0.6, '#fff')}, ${line(0, 2.5, 1.5)}`,
  element: `${clear(90, 7.5)}, ${line(0, 3.5)}`,
  carpet: `${dots(4, 1)}, #fff`,
  torv: `${dots(6, 1.3)}, #fff`
};

const Swatch = styled.span`
  flex: none;
  width: 33px;
  height: 16px;
  margin-right: 2px;
  border: 1.5px solid #000;
  background: ${p => swatchKinds[p.$kind]};
`;

const fills = [
  ['Kledning liggende 150 m/fals', 'hfals'],
  ['Kledning liggende 170', 'hp'],
  ['Kledning stående 200 m/fals', 'vfals'],
  ['Kledning stående150 m/fals (1)', 'vfals'],
  ['Kledning stående170 m/fals', 'vfals'],
  ['Kledning tømmermann 150', 'vfals'],
  ['Kledning tømmermann 170', 'vfals'],
  ['Kledning tømmermann 200', 'vfals'],
  ['Lettklinker', 'light'],
  ['Linear Gradient Fill', 'grad'],
  ['Linjer 100 mm', 'hgray'],
  ['Linjer 120 mm', 'h3'],
  ['Linjer 200 mm', 'hgray'],
  ['Linjer 600 mm', 'v4'],
  ['Membran', 'membran'],
  ['Murverk', 'd'],
  ['Naturstein', 'light'],
  ['Naturstein 02', 'stone'],
  ['NS-Iso6790-1', 'black', true],
  ['Panel liggende 120 glatt', 'h'],
  ['Panel stående 120 glatt', 'v'],
  ['Panel stående 120 skygge', 'vfals'],
  ['Panel stående 145 glatt', 'v'],
  ['Panel stående 145 skygge', 'vfals'],
  ['Plank Floor', 'plank'],
  ['Prikk og stiplet', 'dots2'],
  ['Prikker tett', 'tight'],
  ['Pukk', 'pukk'],
  ['Puss', 'tight'],
  ['Radial Gradient Fill', 'radial'],
  ['Ruter 50x50 Diagonal', 'diamond'],
  ['Ruter 100x100', 'grid'],
  ['Ruter 1200x1200', 'grid'],
  ['Skrålinjer 1', 'd'],
  ['Skrålinjer 2', 'd'],
  ['Skrålinjer 3', 'd'],
  ['Skrålinjer 4', 'd4'],
  ['Skrålinjer 5', 'noise'],
  ['Skrålinjer 6', 'wave'],
  ['Sprengstein', 'spreng'],
  ['Stein - løpende forbandt', 'brick'],
  ['Steinarbeid 1', 'dense'],
  ['Steinarbeid 2', 'dense'],
  ['Steinarbeid 3', 'dense'],
  ['Steinarbeid 4', 'dense'],
  ['Steinarbeid 5', 'darkbrick'],
  ['Stiplet', 'spreng'],
  ['Striper 2', 'd4'],
  ['Ståfals', 'd3'],
  ['Tak 02', 'brick'],
  ['Tak 03', 'roof'],
  ['Tak 04', 'scale'],
  ['Tak 05', 'grid'],
  ['Tegl - Stack Bond - 20/6.8', 'bond'],
  ['Tegl - vanlig forband - 20.3/6.76', 'bond2'],
  ['Tegl 1/2 steins løpeforband', 'brick'],
  ['Tegl 1/4 steins blokkforband', 'brick'],
  ['Tegl 1/4 steins løpeforband', 'brick'],
  ['Tegl Elementforband', 'element'],
  ['Teglstein', 'd3'],
  ['Teppe', 'carpet'],
  ['Torv', 'torv'],
  ['Trefiber', 'wave']
];

const menus = [
  ['File'], ['Edit'], ['View'], ['Design'], ['Document'], ['Options'],
  ['Teamwork', 8], ['Window'], ['EPTAR Solutions', 1], ['Help', 2]
];

// [icon name or sep/caret, width, active, muted]
const topTools = [
  ['sep', 4], ['new', 28], ['caret', 26], ['save', 24], ['print', 26], ['sep', 6], ['doclink', 34], ['caret', 20],
  ['publish', 36], ['caret', 18], ['sep', 12], ['find', 22], ['sep', 8], ['bank', 34], ['caret', 18], ['layers', 38],
  ['caret', 16], ['notes', 32], ['zone', 18, false, true], ['sep', 12], ['undo', 22], ['redo', 28, false, true], ['sep', 7],
  ['triangle', 29, true], ['caret', 24, true], ['snap', 25, true], ['check', 30, true], ['caret', 24, true], ['dbl', 34],
  ['caret', 18], ['sep', 13], ['xy', 29, true], ['caret', 24, true], ['gridx', 32], ['caret', 22], ['ruler', 26],
  ['offset', 30], ['caret', 24], ['lockman', 30, false, true], ['caret', 24, false, true], ['ruler12', 24],
  ['dim', 32, false, true], ['caret', 24, false, true], ['crossx', 24], ['teamsel', 26, true], ['split', 24, true]
];

const statusTools = [
  ['sep', 4], ['swap', 32], ['locks', 28], ['sep', 4], ['group:sel', 90], ['sep', 4], ['group:all', 89], ['sep', 4],
  ['undostack', 30], ['gap', 71], ['sep', 4], ['info', 34], ['caret', 18], ['sep', 10], ['window', 26, true],
  ['bdown', 24], ['bup', 24], ['bsel', 24], ['sep', 8], ['tridown', 25, false, true], ['tribt', 24, false, true],
  ['triup', 25, false, true], ['trilow', 24, false, true], ['sep', 8], ['cam3d', 25], ['explode', 24], ['cubefil', 26],
  ['tilt', 28], ['caret', 25], ['sep', 8], ['box', 25], ['panel', 20], ['sep', 14], ['houselist', 28], ['caret', 22],
  ['sep', 12], ['orbit', 24], ['walk', 23, false, true], ['sep', 8], ['focus', 24, false, true],
  ['housef', 25, false, true], ['cubeA', 25, false, true], ['tripod', 24, false, true], ['sep', 8], ['camera', 28]
];

const favTree = [
  [0, false, 'folder', 'Bygningsdeler'],
  [0, true, 'folder', 'Curtain wall'],
  [1, false, 'folder', 'Scheme'],
  [0, false, 'folder', 'Dekker']
];

const mapTree = [
  [1, false, 'plan', '2. 1. etasje', true],
  [1, false, 'plan', '1. Hav'],
  [0, true, 'section', 'Sections'],
  [1, false, 'section', '16 Snitt (Auto-rebuild Mo'],
  [0, true, 'elev', 'Elevations'],
  [1, false, 'elev', 'Fasade Nord (Auto-rebuil'],
  [0, false, 'ielev', 'Interior Elevations'],
  [0, true, 'ws', 'Worksheets'],
  [1, false, 'ws', 'DWG Underlag (Independ'],
  [1, false, 'ws', 'Kartunderlag (Independer'],
  [0, false, 'detail', 'Details'],
  [0, true, 'doc3d', '3D Documents'],
  [1, false, 'doc3d', '3D- Utomhusplan (Auto-re'],
  [1, false, 'doc3d', '3D- Utsnitt (Auto-rebuild l'],
  [0, true, 'cube', '3D'],
  [1, false, 'persp', 'Generic Perspective'],
  [1, false, 'axo', 'Generic Axonometry'],
  [1, false, 'film', '00 Filmbane Utv.'],
  [1, false, 'film', '01 Filmbane innv.'],
  [0, true, 'sched', 'Schedules'],
  [1, true, 'elems', 'Elements'],
  [2, false, 'sched', '00 Volumstudie/konsept'],
  [2, false, 'sched', '01 Beslagsliste dører'],
  [2, false, 'sched', '01 Dører redigering og l'],
  [2, false, 'sched', '01 Liste dører'],
  [2, false, 'sched', '01 Skjema dører (A4)'],
  [2, false, 'sched', '01 Skjema dører (større'],
  [2, false, 'sched', '02 Liste vinduer']
];

const toolboxTools = ['level', 'elevm', 'lindim', 'angle', 'radial', 'levelcurve', 'letterA', 'label', 'fill', 'line', 'circle', 'arc', 'spline', 'image', 'drawing', 'wsdoc', 'move', 'detail', 'cloud'];

const toolboxSize = { fill: 24, label: 28 };

function ToolRun({ items, renderExtra }) {
  return items.map(([name, w, on, muted], idx) => {
    if (name === 'sep') return <ToolSep key={idx} $w={w} />;
    if (name === 'caret') {
      return <ToolCell key={idx} $w={w} $on={on}><Caret $muted={muted} /></ToolCell>;
    }
    if (renderExtra && renderExtra[name]) return <React.Fragment key={idx}>{renderExtra[name](w)}</React.Fragment>;
    return (
      <ToolCell key={idx} $w={w} $on={on}>
        <Icon name={name} size={name === 'find' || name === 'bank' ? 20 : 19} c={muted ? '#b5b5b5' : '#3a3a3a'} />
      </ToolCell>
    );
  });
}

function TreeItems({ rows }) {
  return rows.map(([level, open, icon, label, sel], idx) => (
    <TreeRow key={idx} $level={level} $sel={sel}>
      <Chevron viewBox="0 0 17 10">
        {open ? <path d="M4 3l4.5 4.5L13 3" /> : null}
      </Chevron>
      <Icon name={icon} size={18} />
      <TreeLabel>{label}</TreeLabel>
    </TreeRow>
  ));
}

function FolderArt({ mt }) {
  return (
    <BigFolder viewBox="0 0 100 76" $mt={mt}>
      <path d="M1 6a5 5 0 0 1 5-5h22l8 8h58a5 5 0 0 1 5 5v56a5 5 0 0 1-5 5H6a5 5 0 0 1-5-5z" />
    </BigFolder>
  );
}

const statusExtras = {
  'group:sel': w => (
    <LayerGroup $w={w}>
      <LayerTitle>Selection's Layer:</LayerTitle>
      <LayerIcons $w={70} $ml={5}>
        <Icon name="eyeoff" size={16} c="#b5b5b5" />
        <Icon name="lock" size={14} c="#b5b5b5" />
        <Icon name="unlock" size={14} c="#b5b5b5" />
      </LayerIcons>
    </LayerGroup>
  ),
  'group:all': w => (
    <LayerGroup $w={w}>
      <LayerTitle>All Layers:</LayerTitle>
      <LayerIcons $w={46} $ml={3}>
        <Icon name="eyeoff" size={16} />
        <Icon name="lock" size={14} />
      </LayerIcons>
    </LayerGroup>
  ),
  undostack: () => (
    <UndoStack>
      <Icon name="redo" size={12} c="#b5b5b5" />
      <Icon name="undo" size={12} c="#b5b5b5" />
    </UndoStack>
  ),
  gap: w => <ToolCell $w={w} />
};

function LeftColumn() {
  return (
    <LeftPanel>
      <Gripper $mt={5} />
      <RowBlock $h={21} $mt={5}>
        <SearchBox $w={179}>
          <Icon name="search" size={15} c="#666" />
          Search Favorites
        </SearchBox>
        <SmallBtn $w={25} $h={21} $ml={8}>
          <Settings size={15} strokeWidth={1.3} color="#444" />
          <TriRight />
        </SmallBtn>
      </RowBlock>
      <TreeArea $h={85} $mt={2}>
        <TreeList><TreeItems rows={favTree} /></TreeList>
        <ScrollCol><Thumb $h={26} $mt={27} /></ScrollCol>
      </TreeArea>
      <TreeArea $h={267} $mt={15}>
        <Preview>
          <FolderArt mt={0} />
          <PreviewLabel>2D</PreviewLabel>
          <FolderArt mt={39} />
        </Preview>
        <ScrollCol><Thumb $h={25} $mt={25} /></ScrollCol>
      </TreeArea>
      <RowBlock $h={21} $mt={6}>
        <IconSlot $w={28}><Icon name="starplus" c="#b5b5b5" /></IconSlot>
        <IconSlot $w={30}><Icon name="folderplus" size={21} /></IconSlot>
        <IconSlot $w={28}><Icon name="cross" size={16} c="#f7a79a" /></IconSlot>
        <ApplyBtn $ml={46}>
          <ApplyText>Apply</ApplyText>
          <ApplyCaret><TriDown /></ApplyCaret>
        </ApplyBtn>
      </RowBlock>
      <Gripper $mt={10} />
      <RowBlock $h={29} $mt={3}>
        <IconSlot $w={28} $on><Icon name="house" /></IconSlot>
        <VLine $h={20} $ml={5} />
        <IconSlot $w={30} $ml={5}><Icon name="houseplan" /></IconSlot>
        <IconSlot $w={30}><Icon name="plansheet" /></IconSlot>
        <IconSlot $w={30}><Icon name="stack" /></IconSlot>
        <SmallBtn $w={32} $h={19} $ml={52}>
          <Icon name="menu" size={15} />
          <TriRight />
        </SmallBtn>
      </RowBlock>
      <RowBlock $h={21} $mt={7}>
        <SearchBox $w={212}>
          <Icon name="search" size={15} c="#666" />
          Search Project Map
        </SearchBox>
      </RowBlock>
      <TreeArea $h={600} $mt={2}>
        <TreeList><TreeItems rows={mapTree} /></TreeList>
        <ScrollCol>
          <ScrollTri $mt={11} />
          <Thumb $h={115} $mt={24} $w={13} />
          <ScrollTri $mt={426} $down />
        </ScrollCol>
      </TreeArea>
      <HorizontalThumb />
      <RowBlock $h={22} $mt={12}>
        <IconSlot $w={28}><Icon name="plusc" size={17} /></IconSlot>
        <IconSlot $w={30}><Icon name="listsq" size={17} /></IconSlot>
        <IconSlot $w={28}><Icon name="cross" size={17} c="#f04a2a" /></IconSlot>
      </RowBlock>
      <SectionBar $w={213} $mt={6} $pl={5} $gap={9}>
        <TriDown />
        Properties
      </SectionBar>
      <RowBlock $h={18} $mt={5}>
        <IconSlot $w={15} $ml={2}><Icon name="folder" size={14} /></IconSlot>
        <StoryName>2.</StoryName>
        <WhiteField>1. etasje</WhiteField>
      </RowBlock>
      <WideBtn>Settings...</WideBtn>
    </LeftPanel>
  );
}

function InfoStrip() {
  return (
    <InfoBox>
      <InfoCell $w={186}>
        <InfoLabel>Main:</InfoLabel>
        <InfoBody>
          <DefaultText>Default Settings</DefaultText>
          <Select $w={47}>
            <Icon name="fill" size={24} />
            <CaretDivider><TriDown /></CaretDivider>
          </Select>
        </InfoBody>
      </InfoCell>
      <InfoCell $w={181}>
        <InfoLabel>Layer:</InfoLabel>
        <InfoBody>
          <Select $w={169} $ml={1}>
            <Icon name="eye" size={16} />
            <SelectText>878- Annen overflate/vis...</SelectText>
            <TriRight />
          </Select>
        </InfoBody>
      </InfoCell>
      <InfoCell $w={180}>
        <InfoLabel>Geometry Method:</InfoLabel>
        <InfoBody>
          <ConstrBtn $w={42} $ml={1}><Icon name="fill" size={20} /></ConstrBtn>
          <ConstrBtn $w={42} $on><Icon name="rectfill" size={20} /></ConstrBtn>
          <ConstrBtn $w={42}><Icon name="rotfill" size={24} /></ConstrBtn>
        </InfoBody>
      </InfoCell>
      <InfoCell $w={181}>
        <InfoLabel>Fill Category:</InfoLabel>
        <InfoBody>
          <Select $w={172} $ml={2}>
            <Icon name="fill" size={20} />
            <SelectText>Drafting Fill</SelectText>
            <TriRight />
          </Select>
        </InfoBody>
      </InfoCell>
      <InfoCell $w={200}>
        <InfoLabel>Fill Type:</InfoLabel>
        <InfoBody>
          <Select $w={190} $ml={2}>
            <BlackSwatch />
            <SelectText>Ruter 1200x1200</SelectText>
          </Select>
        </InfoBody>
      </InfoCell>
      <Stretch />
      <InfoEdge />
    </InfoBox>
  );
}

function ToolboxColumn() {
  return (
    <Toolbox>
      <ToolboxGrip />
      <ToolboxTop><Icon name="arrow" size={18} c="#666" /></ToolboxTop>
      <ToolboxTop><Icon name="marquee" size={20} c="#555" /></ToolboxTop>
      <ToolboxTab $mt={4}>Design</ToolboxTab>
      <ToolboxTab $mt={3} $mb={1}>Docume</ToolboxTab>
      {toolboxTools.map(name => (
        <ToolboxItem key={name} $on={name === 'fill'}><Icon name={name} size={toolboxSize[name] || 22} /></ToolboxItem>
      ))}
      <ToolboxTab $mt={4}>More</ToolboxTab>
    </Toolbox>
  );
}

function ViewArea() {
  return (
    <ViewColumn>
      <TabBar>
        <GridTab><Icon name="grid4" size={18} /></GridTab>
        <Tab $w={295} $on>
          <Icon name="plan" size={16} c="#2f7fe6" />
          (!) 2. 1. etasje [2. 1. etasje]
          <TabClose>×</TabClose>
        </Tab>
        <Tab $w={292} $line>
          <Icon name="sched" size={14} c="#2f7fe6" />
          &nbsp;(!) Skjema vinduer (A4) [02 Skjema vinduer (A4)]
        </Tab>
        <Tab $w={200}>
          <Icon name="persp" size={16} c="#2f7fe6" />
          (!) 3D-Modell BIMx [3D / All]
        </Tab>
      </TabBar>
      <Canvas>
        <Drawing>
          <path d="M296 151.5V700M443 151.5V700M147 259.5H840M147 406.5H840M147 553.5H840" stroke="#999" />
          <path d="M147.5 151.5H840M147.5 151.5L145.5 700M145.5 700H840" stroke="#222" />
        </Drawing>
        <OriginMark />
      </Canvas>
      <NavBar>
        <NavCell $w={18}><Icon name="rewind" size={16} /></NavCell>
        <NavCell $w={24}><Icon name="forward" size={16} c="#b5b5b5" /></NavCell>
        <NavCell $w={24}><Icon name="zoomin" size={16} /></NavCell>
        <NavSep />
        <NavCell $w={22}><Icon name="zoomfit" size={16} /></NavCell>
        <NavCell $w={236} $pl={6}>88%</NavCell>
        <NavCell $w={10}><TriRight /></NavCell>
        <NavSep $mx={4} />
        <NavCell $w={24}><Icon name="rotate" size={16} /></NavCell>
        <NavCell $w={236} $pl={6}>0,000°</NavCell>
        <NavCell $w={10}><TriRight /></NavCell>
        <NavSep $mx={4} />
        <NavCell $w={24}><Icon name="rulerS" size={16} /></NavCell>
        <NavCell $w={236}>1:30</NavCell>
        <Stretch />
        <NavSep />
        <NavEnd $w={20}><Icon name="hatchbox" size={16} /></NavEnd>
      </NavBar>
    </ViewColumn>
  );
}

function FillDialog() {
  return (
    <Dialog>
      <DialogTitle>
        <TitleMark viewBox="0 0 21 20">
          <path d="M3 17C5 7 10 3 16 5" />
          <path d="M18 14v.5" />
        </TitleMark>
        Fill Default Settings
      </DialogTitle>
      <DialogBtn $h={23} $mt={11}>
        <Icon name="star" size={17} />
        <TriRight />
      </DialogBtn>
      <FullBar $mt={10} $pl={5} $gap={6}>
        <TriDown />
        <Icon name="fill" size={18} />
        GENERAL SETTINGS
      </FullBar>
      <DialogRow $h={37} $mt={6}>
        <DialogBtn $h={37} $on><Icon name="checkshape" size={22} /></DialogBtn>
        <LineSelect>
          Solid Line
          <LineRule />
          <OverTri><TriRight /></OverTri>
        </LineSelect>
      </DialogRow>
      <DialogRow $h={37} $mt={12}>
        <DialogBtn $h={37}>
          <Icon name="fill" size={20} />
          <TriRight />
        </DialogBtn>
        <Select $w={262} $h={37} $ml={12} $on>
          <WhiteSwatch />
          <SelectText>Ruter 1200x1200</SelectText>
          <TriRight />
        </Select>
      </DialogRow>
      <ConstructionLabel>Construction Method:</ConstructionLabel>
      <DialogRow $h={24} $mt={5}>
        <ConstrBtn $w={38} $ml={50} $on><Icon name="constr1" size={20} c="#2f4a5f" /></ConstrBtn>
        <ConstrBtn $w={38}><Icon name="constr2" size={20} /></ConstrBtn>
        <ConstrBtn $w={40}><Icon name="constr3" size={20} /></ConstrBtn>
        <ConstrBtn $w={38}><Icon name="constr2" size={20} c="#b5b5b5" /></ConstrBtn>
      </DialogRow>
      <DialogRow $h={20} $mt={6}>
        <Check />
        <CheckText>Show Area Text</CheckText>
      </DialogRow>
      <DialogRow $h={20} $mt={4}>
        <Check />
        <CheckText>Subtract from Zones</CheckText>
        <ZeroInput>0</ZeroInput>
      </DialogRow>
      <FullBar $mt={9} $pl={5} $gap={6}>
        <TriDown />
        <Icon name="reportdoc" size={16} />
        &nbsp;PROPERTIES
      </FullBar>
      <PropTable>
        <PropRow $group>
          <PropTri><TriDown /></PropTri>
          <span>ID AND CATEGORIES</span>
        </PropRow>
        <PropRow $dark>
          <span />
          <span>ID</span>
        </PropRow>
        <PropRow $group>
          <PropTri><TriDown /></PropTri>
          <span>DESIGN OPTIONS</span>
          <span>use Palette to set def</span>
        </PropRow>
        <PropRow>
          <span />
          <span>Option Status</span>
          <span>(Main Model)</span>
        </PropRow>
        <PropRow $group>
          <PropTri><TriDown /></PropTri>
          <span>RENOVATION</span>
          <span>use Palette to set def</span>
        </PropRow>
        <PropRow>
          <span />
          <span>Renovation Status</span>
          <span>New</span>
        </PropRow>
        <PropRow>
          <span />
          <span>Show On Renovation Filter</span>
          <span>All Relevant Filters</span>
        </PropRow>
      </PropTable>
      <Divider />
      <DialogRow $h={22} $mt={45}>
        <IconSlot $w={28}><Icon name="layerstack" size={26} /></IconSlot>
        <Select $w={233} $h={22} $ml={7}>
          <Icon name="eye" size={16} />
          <SelectText>878- Annen overflate/visuell informas...</SelectText>
          <TriRight />
        </Select>
        <FooterBtn />
      </DialogRow>
    </Dialog>
  );
}

function FillPopup() {
  return (
    <Popup>
      <PopSearchRow>
        <PopSearch>
          <Icon name="search" size={13} c="#666" />
          Search Fill
        </PopSearch>
        <Icon name="menu" size={15} />
        <PopViewBtn />
      </PopSearchRow>
      <PopHeader>
        <HeaderName>Name<SortTri /></HeaderName>
        <HeaderEnd><TriRight /></HeaderEnd>
      </PopHeader>
      <PopBody>
        <FillList>
          {fills.map(([name, kind, italic]) => (
            <FillRow key={name} $sel={name === 'Ruter 1200x1200'} $italic={italic}>
              <Swatch $kind={kind} />
              {name}
            </FillRow>
          ))}
        </FillList>
        <FillScroll><Thumb $h={734} $mt={549} /></FillScroll>
      </PopBody>
    </Popup>
  );
}

export default function App() {
  return (
    <Page>
      <GlobalStyle />
      <MenuBar>
        {menus.map(([label, ml]) => <MenuItem key={label} $ml={ml}>{label}</MenuItem>)}
      </MenuBar>
      <Toolbar>
        <ToolRun items={topTools} />
        <Stretch />
        <ToolCell $w={20}><Caret /></ToolCell>
        <EdgeCell $w={32}><Icon name="house" c="#a8a8a8" /></EdgeCell>
      </Toolbar>
      <Main>
        <LeftColumn />
        <RightSide>
          <InfoStrip />
          <WorkRow>
            <ToolboxColumn />
            <ViewArea />
          </WorkRow>
        </RightSide>
      </Main>
      <StatusBar>
        <StatusRow>
          <ToolRun items={statusTools} renderExtra={statusExtras} />
          <Stretch />
          <ToolCell $w={20}><Caret $muted /></ToolCell>
          <EdgeCell $w={26}><Icon name="zoomfit" c="#7fb3f0" /></EdgeCell>
        </StatusRow>
      </StatusBar>
      <FillDialog />
      <FillPopup />
    </Page>
  );
}
